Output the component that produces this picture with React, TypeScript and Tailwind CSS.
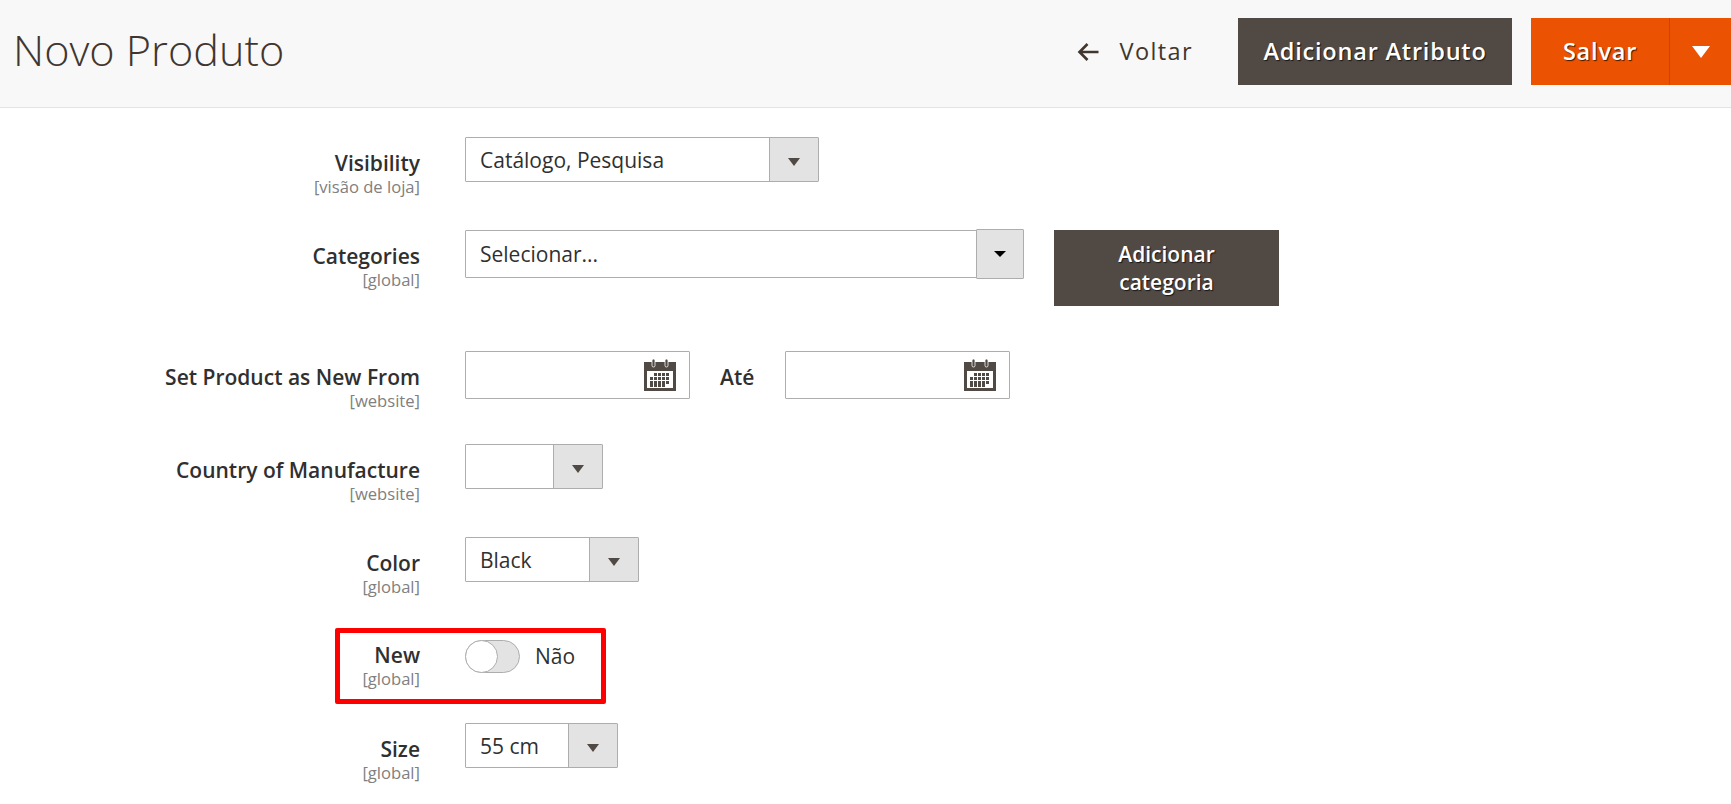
const FieldLabel = ({ name, scope, top = "pt-[12px]" }: { name: string; scope: string; top?: string }) => (
  <div className={`w-[420px] shrink-0 text-right ${top}`}>
    <div className="text-[21px] leading-[28px] font-semibold text-[#303030]">{name}</div>
    <div className="text-[16.6px] leading-[19px] text-[#808080]">{scope}</div>
  </div>
);

const Select = ({
  value,
  width,
  button,
  height = "h-[45px]",
  dark,
}: {
  value: string;
  width: string;
  button: string;
  height?: string;
  dark?: boolean;
}) => (
  <div className={`flex ${width} ${height} shrink-0 rounded-[1px] border border-[#adadad] bg-white`}>
    <div className="flex flex-1 items-center pt-[2px] pl-[14px] text-[21px] text-[#303030]">{value}</div>
    {dark ? (
      <div className={`-my-[2px] -mr-px flex ${button} items-center justify-center rounded-[1px] border border-[#adadad] bg-[#e3e3e3]`}>
        <svg width="12" height="6" viewBox="0 0 12 6">
          <path d="M0 0h12L6 6z" fill="#000" />
        </svg>
      </div>
    ) : (
      <div className={`flex ${button} items-center justify-center border-l border-[#adadad] bg-[#e3e3e3] pt-[5px]`}>
        <svg width="12" height="8" viewBox="0 0 12 8">
          <path d="M0 0h12L6 8z" fill="#514943" />
        </svg>
      </div>
    )}
  </div>
);

const CalendarIcon = () => (
  <svg width="32" height="32" viewBox="0 0 32 32">
    <rect x="0" y="3" width="32" height="29" fill="#514943" />
    <rect x="3" y="12" width="26" height="17" fill="#fff" />
    <rect x="8" y="0" width="3" height="8" rx="1.500" fill="#514943" stroke="#fff" strokeWidth="0.8" />
    <rect x="21" y="0" width="3" height="8" rx="1.500" fill="#514943" stroke="#fff" strokeWidth="0.8" />
    {[14, 18, 22, 25].map((y) =>
      [6, 10, 14, 18, 22].map((x) =>
        (y === 14 && x === 6) || (y === 25 && x === 22) ? null : (
          <rect key={`${x}-${y}`} x={x} y={y} width="3" height="3" fill="#514943" />
        ),
      ),
    )}
  </svg>
);

const DateInput = () => (
  <div className="flex h-[48px] w-[225px] shrink-0 items-center justify-end rounded-[1px] border border-[#adadad] bg-white pr-[13px]">
    <CalendarIcon />
  </div>
);

export default function App() {
  return (
    <div className="h-[804px] overflow-hidden bg-white font-['Open_Sans',sans-serif]">
      <header className="flex h-[108px] justify-between border-b border-[#e3e3e3] bg-[#f8f8f8] pl-[13px]">
        <h1 className="pt-[20px] text-[43.200px] leading-[60px] font-light text-[#41362f]">Novo Produto</h1>
        <div className="flex h-[85px] items-stretch pt-[18px]">
          <button className="mr-[45px] flex items-center text-[23.500px] tracking-[1.400px] text-[#41362f]">
            <svg width="22" height="20" viewBox="0 0 22 20" className="mr-[20px]">
              <path d="M21.500 10H3M10.500 2 2.500 10l8 8" fill="none" stroke="#41362f" strokeWidth="2.600" />
            </svg>
            Voltar
          </button>
          <button className="flex w-[274px] items-center justify-center bg-[#514943] text-[23.500px] font-semibold tracking-[0.800px] text-white [text-shadow:1px_1px_1px_rgba(0,0,0,0.7)]">
            Adicionar Atributo
          </button>
          <div className="ml-[19px] flex w-[200px] bg-[#eb5202]">
            <button className="flex w-[138px] items-center justify-center text-[23.500px] font-semibold tracking-[0.800px] text-white [text-shadow:1px_1px_1px_rgba(0,0,0,0.7)]">
              Salvar
            </button>
            <button className="flex flex-1 items-center justify-center border-l border-[#c64607]">
              <svg width="18" height="12" viewBox="0 0 18 12">
                <path d="M0 0h18L9 12z" fill="#fff" />
              </svg>
            </button>
          </div>
        </div>
      </header>

      <main className="pt-[29px]">
        <div className="flex h-[45px] gap-[45px]">
          <FieldLabel name="Visibility" scope="[visão de loja]" />
          <Select value="Catálogo, Pesquisa" width="w-[354px]" button="w-[49px]" />
        </div>

        <div className="mt-[48px] flex h-[76px] items-start gap-[45px]">
          <FieldLabel name="Categories" scope="[global]" />
          <Select value="Selecionar..." width="w-[559px]" button="w-[48px]" height="h-[48px]" dark />
          <button className="ml-[-15px] h-[76px] w-[225px] bg-[#514943] text-[21px] leading-[28px] font-semibold text-white [text-shadow:1px_1px_1px_rgba(0,0,0,0.7)]">
            Adicionar
            <br />
            categoria
          </button>
        </div>

        <div className="mt-[45px] flex h-[48px] gap-[45px]">
          <FieldLabel name="Set Product as New From" scope="[website]" />
          <DateInput />
          <div className="ml-[-15px] flex w-[65px] items-center pt-[5px] text-[21px] font-semibold text-[#303030]">
            Até
          </div>
          <div className="ml-[-45px]">
            <DateInput />
          </div>
        </div>

        <div className="mt-[45px] flex h-[45px] gap-[45px]">
          <FieldLabel name="Country of Manufacture" scope="[website]" />
          <Select value="" width="w-[138px]" button="w-[49px]" />
        </div>

        <div className="mt-[48px] flex h-[45px] gap-[45px]">
          <FieldLabel name="Color" scope="[global]" />
          <Select value="Black" width="w-[174px]" button="w-[49px]" />
        </div>

        <div className="relative mt-[58px] flex h-[33px] gap-[45px]">
          <FieldLabel name="New" scope="[global]" top="mt-[1px]" />
          <div className="flex items-center">
            <div className="relative h-[33px] w-[55px] rounded-full border border-[#adadad] bg-[#e3e3e3]">
              <div className="absolute -top-px -left-px h-[33px] w-[33px] rounded-full border border-[#adadad] bg-white" />
            </div>
            <span className="ml-[15px] text-[21px] text-[#303030]">Não</span>
          </div>
          <div className="absolute top-[-12px] left-[335px] h-[76px] w-[271px] rounded-[2px] border-[5px] border-[#ff0000]" />
        </div>

        <div className="mt-[50px] flex h-[45px] gap-[45px]">
          <FieldLabel name="Size" scope="[global]" />
          <Select value="55 cm" width="w-[153px]" button="w-[49px]" />
        </div>
      </main>
    </div>
  );
}
